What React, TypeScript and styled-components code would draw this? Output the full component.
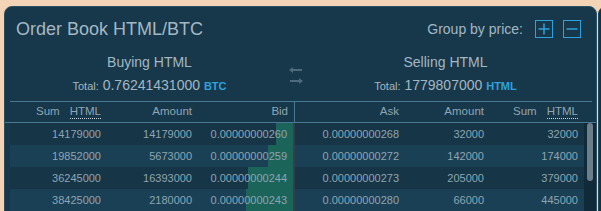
import styled, { createGlobalStyle } from "styled-components";

const GlobalStyle = createGlobalStyle`
  html, body {
    margin: 0;
    padding: 0;
    background: #f4d4b6;
    overflow: hidden;
  }
  body {
    font-family: "Liberation Sans", Arial, sans-serif;
  }
`;

const Page = styled.div`
  display: flex;
  gap: 1px;
  width: 601px;
  padding: 6px 0 0 4px;
  box-sizing: border-box;
  overflow: hidden;
`;

const Panel = styled.section`
  flex: 0 0 593px;
  box-sizing: border-box;
  background: #17374a;
  border: 1px solid #2b5167;
  border-radius: 8px;
  min-height: 240px;
  color: #8ea5b1;
`;

const SidePanel = styled.div`
  flex: 0 0 80px;
  background: #15323f;
  border: 1px solid #244656;
  border-radius: 8px;
  min-height: 240px;
`;

const TitleBar = styled.header`
  display: flex;
  align-items: center;
  justify-content: space-between;
  padding: 11px 15px 0 11px;
`;

const Title = styled.h1`
  margin: 0;
  font-size: 18px;
  line-height: 22px;
  font-weight: 400;
  color: #a3b7c3;
`;

const Grouping = styled.div`
  display: flex;
  align-items: center;
  gap: 10px;
  font-size: 14px;
  color: #a3b7c3;
`;

const GroupLabel = styled.span`
  margin-right: 2px;
`;

const SquareButton = styled.button`
  width: 18px;
  height: 18px;
  padding: 0;
  box-sizing: border-box;
  border: 1.5px solid #2fa2dc;
  background: transparent;
  display: grid;
  place-items: center;
  cursor: pointer;
`;

const Summary = styled.div`
  display: grid;
  grid-template-columns: 279px 14px 1fr;
  align-items: center;
  padding: 14px 8px 0 5px;
`;

const Side = styled.div`
  text-align: center;
`;

const SideTitle = styled.div`
  font-size: 14px;
  line-height: 17px;
  color: #a3b7c3;
`;

const TotalLine = styled.div`
  margin-top: 6px;
  font-size: 14px;
  line-height: 17px;
  color: #a3b7c3;
  white-space: nowrap;
`;

const TotalLabel = styled.span`
  font-size: 11px;
`;

const Unit = styled.span`
  font-size: 11px;
  font-weight: 700;
  color: #2fa2dc;
`;

const HeadWrap = styled.div`
  margin-top: 6px;
  border-bottom: 1px solid #4a7792;
`;

const HeadInner = styled.div`
  display: grid;
  grid-template-columns: 285px 1fr;
  margin: 0 4px 0 5px;
  border-top: 1px solid #4a7792;
`;

const Cols = styled.div<{ $cols: string; $padRight?: number }>`
  display: grid;
  grid-template-columns: ${(p) => p.$cols};
  padding-right: ${(p) => p.$padRight ?? 0}px;
`;

const HeadCols = styled(Cols)<{ $divider?: boolean }>`
  border-right: ${(p) => (p.$divider ? "1px solid #4a7792" : "none")};
`;

const HeadCell = styled.div`
  font-size: 11.5px;
  line-height: 18px;
  padding: 0 6px 2px 0;
  text-align: right;
  color: #8fa6b2;
  white-space: nowrap;
`;

const Dotted = styled.span`
  margin-left: 10px;
  border-bottom: 1px dotted #c8d4da;
  padding-bottom: 1px;
`;

const Body = styled.div`
  display: grid;
  grid-template-columns: 285px 1fr;
  padding-left: 5px;
`;

const LeftBody = styled.div`
  border-right: 2px solid #3a3b4b;
`;

const RightBody = styled.div`
  display: flex;
`;

const Rows = styled.div`
  flex: 1;
`;

const Row = styled(Cols)<{ $even: boolean }>`
  position: relative;
  height: 22px;
  background: ${(p) => (p.$even ? "#1a4055" : "#163547")};
`;

const DepthBar = styled.div`
  position: absolute;
  top: 0;
  right: 0;
  bottom: 0;
  background: #1a6459;
`;

const Cell = styled.div`
  position: relative;
  z-index: 1;
  font-size: 11px;
  line-height: 22px;
  padding-right: 6px;
  text-align: right;
  color: #8ea5b1;
`;

const Track = styled.div`
  flex: 0 0 12px;
  background: #112a3a;
  padding-left: 3px;
  box-sizing: border-box;
`;

const Thumb = styled.div`
  width: 6px;
  height: 58px;
  border-radius: 3px;
  background: #6b7f8a;
`;

const Swap = () => (
  <svg width="14" height="20" viewBox="0 0 14 20" fill="#4c6b7d">
    <polygon points="0,5 4,2 4,8" />
    <rect x="4" y="4" width="9" height="2" />
    <rect x="1" y="15" width="9" height="2" />
    <polygon points="14,16 10,13 10,19" />
  </svg>
);

const bids = [
  { sum: "14179000", amount: "14179000", price: "0.00000000260", depth: 17 },
  { sum: "19852000", amount: "5673000", price: "0.00000000259", depth: 25 },
  { sum: "36245000", amount: "16393000", price: "0.00000000244", depth: 45 },
  { sum: "38425000", amount: "2180000", price: "0.00000000243", depth: 47 },
];

const asks = [
  { price: "0.00000000268", amount: "32000", sum: "32000" },
  { price: "0.00000000272", amount: "142000", sum: "174000" },
  { price: "0.00000000273", amount: "205000", sum: "379000" },
  { price: "0.00000000280", amount: "66000", sum: "445000" },
];

const LEFT_COLS = "97px 91px 1fr";
const RIGHT_COLS = "110px 85px 1fr";

export default function App() {
  return (
    <>
      <GlobalStyle />
      <Page>
        <Panel>
          <TitleBar>
            <Title>Order Book HTML/BTC</Title>
            <Grouping>
              <GroupLabel>Group by price:</GroupLabel>
              <SquareButton aria-label="increase grouping">
                <svg width="14" height="14" viewBox="0 0 14 14">
                  <path d="M7 1.5v11M1.5 7h11" stroke="#2fa2dc" strokeWidth="1.5" />
                </svg>
              </SquareButton>
              <SquareButton aria-label="decrease grouping">
                <svg width="14" height="14" viewBox="0 0 14 14">
                  <path d="M1.5 7h11" stroke="#2fa2dc" strokeWidth="1.5" />
                </svg>
              </SquareButton>
            </Grouping>
          </TitleBar>

          <Summary>
            <Side>
              <SideTitle>Buying HTML</SideTitle>
              <TotalLine>
                <TotalLabel>Total:</TotalLabel> 0.76241431000 <Unit>BTC</Unit>
              </TotalLine>
            </Side>
            <Swap />
            <Side>
              <SideTitle>Selling HTML</SideTitle>
              <TotalLine>
                <TotalLabel>Total:</TotalLabel> 1779807000 <Unit>HTML</Unit>
              </TotalLine>
            </Side>
          </Summary>

          <HeadWrap>
            <HeadInner>
              <HeadCols $cols={LEFT_COLS} $divider>
                <HeadCell>
                  Sum<Dotted>HTML</Dotted>
                </HeadCell>
                <HeadCell>Amount</HeadCell>
                <HeadCell>Bid</HeadCell>
              </HeadCols>
              <HeadCols $cols={RIGHT_COLS} $padRight={8}>
                <HeadCell>Ask</HeadCell>
                <HeadCell>Amount</HeadCell>
                <HeadCell>
                  Sum<Dotted>HTML</Dotted>
                </HeadCell>
              </HeadCols>
            </HeadInner>
          </HeadWrap>

          <Body>
            <LeftBody>
              {bids.map((b, i) => (
                <Row key={b.price} $cols={LEFT_COLS} $even={i % 2 === 1}>
                  <DepthBar style={{ width: b.depth }} />
                  <Cell>{b.sum}</Cell>
                  <Cell>{b.amount}</Cell>
                  <Cell>{b.price}</Cell>
                </Row>
              ))}
            </LeftBody>
            <RightBody>
              <Rows>
                {asks.map((a, i) => (
                  <Row key={a.price} $cols={RIGHT_COLS} $even={i % 2 === 1}>
                    <Cell>{a.price}</Cell>
                    <Cell>{a.amount}</Cell>
                    <Cell>{a.sum}</Cell>
                  </Row>
                ))}
              </Rows>
              <Track>
                <Thumb />
              </Track>
            </RightBody>
          </Body>
        </Panel>
        <SidePanel />
      </Page>
    </>
  );
}
